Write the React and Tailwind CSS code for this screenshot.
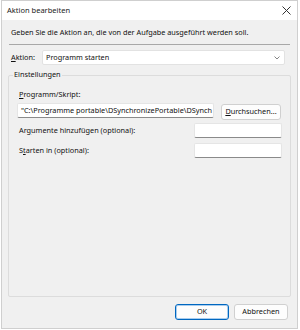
import React from 'react';

function Field({ className = '', children }) {
    return (
        <div className={`h-[15px] bg-white border border-[#e5e5e5] border-b-[#8a8a8a] rounded-[2px] flex items-center px-[3px] overflow-hidden whitespace-nowrap ${className}`}>
            {children}
        </div>
    );
}

function Btn({ primary, className = '', children }) {
    return (
        <div className={`h-[16px] rounded-[3px] bg-[#fdfdfd] flex items-center justify-center ${primary ? 'border border-[#0067c0] shadow-[inset_0_0_0_1px_#a9cdee]' : 'border border-[#d0d0d0]'} ${className}`}>
            {children}
        </div>
    );
}

export default function App() {
    return (
        <div className="w-[300px] h-[330px] bg-white text-[#111] text-[7.3px] leading-none" style={{ fontFamily: '"Noto Sans", "Open Sans", sans-serif' }}>
            <div className="ml-[1px] w-[297px] h-[329px] border border-[#cfcfcf] flex flex-col">

                {/* Title bar */}
                <div className="h-[19px] bg-white flex items-center justify-between pl-[5px] pr-[6px]">
                    <span className="text-[7.5px] text-[#1a1a1a]">Aktion bearbeiten</span>
                    <svg width="9" height="9" viewBox="0 0 9 9">
                        <path d="M0.5 0.5 L8.5 8.5 M8.5 0.5 L0.5 8.5" stroke="#333" strokeWidth="1" />
                    </svg>
                </div>

                {/* Body */}
                <div className="flex-1 bg-[#f0f0f0] flex flex-col px-[6px]">
                    <p className="mt-[8px] h-[10px] flex items-center pl-[3px]">Geben Sie die Aktion an, die von der Aufgabe ausgeführt werden soll.</p>
                    <div className="mt-[6px] mx-[1px] h-px bg-[#a8a8a8]" />

                    <div className="mt-[5px] flex items-center pl-[3px] pr-[6px]">
                        <span className="w-[31px]"><u>A</u>ktion:</span>
                        <div className="flex-1 h-[15px] bg-white border border-[#e2e2e2] rounded-[2px] flex items-center justify-between pl-[3px] pr-[4px]">
                            <span>Programm starten</span>
                            <svg width="6" height="4" viewBox="0 0 6 4">
                                <path d="M0.5 0.5 L3 3 L5.5 0.5" stroke="#666" strokeWidth="0.8" fill="none" />
                            </svg>
                        </div>
                    </div>

                    {/* Group box */}
                    <div className="relative mt-[10px] h-[222px] border border-[#dcdcdc] rounded-[2px]">
                        <span className="absolute left-[4px] top-[-5px] bg-[#f0f0f0] px-[1px]">Einstellungen</span>
                        <div className="flex flex-col pl-[8px] pr-[8px] pt-[14px]">
                            <span className="h-[10px] flex items-center pl-[2px]"><span><u>P</u>rogramm/Skript:</span></span>
                            <div className="mt-[3px] flex items-start gap-[7px]">
                                <Field className="w-[197px]">"C:\Programme portable\DSynchronizePortable\DSynch</Field>
                                <Btn className="w-[60px] mt-[1px]"><span><u>D</u>urchsuchen...</span></Btn>
                            </div>
                            <div className="mt-[3px] flex items-center justify-between pl-[2px]">
                                <span>Ar<u>g</u>umente hinzufügen (optional):</span>
                                <Field className="w-[88px]" />
                            </div>
                            <div className="mt-[5px] flex items-center justify-between pl-[2px]">
                                <span>S<u>t</u>arten in (optional):</span>
                                <Field className="w-[88px]" />
                            </div>
                        </div>
                    </div>

                    <div className="mt-[7px] flex justify-end gap-[5px] pr-[3px]">
                        <Btn primary className="w-[54px]">OK</Btn>
                        <Btn className="w-[54px]">Abbrechen</Btn>
                    </div>
                </div>
            </div>
        </div>
    );
}
